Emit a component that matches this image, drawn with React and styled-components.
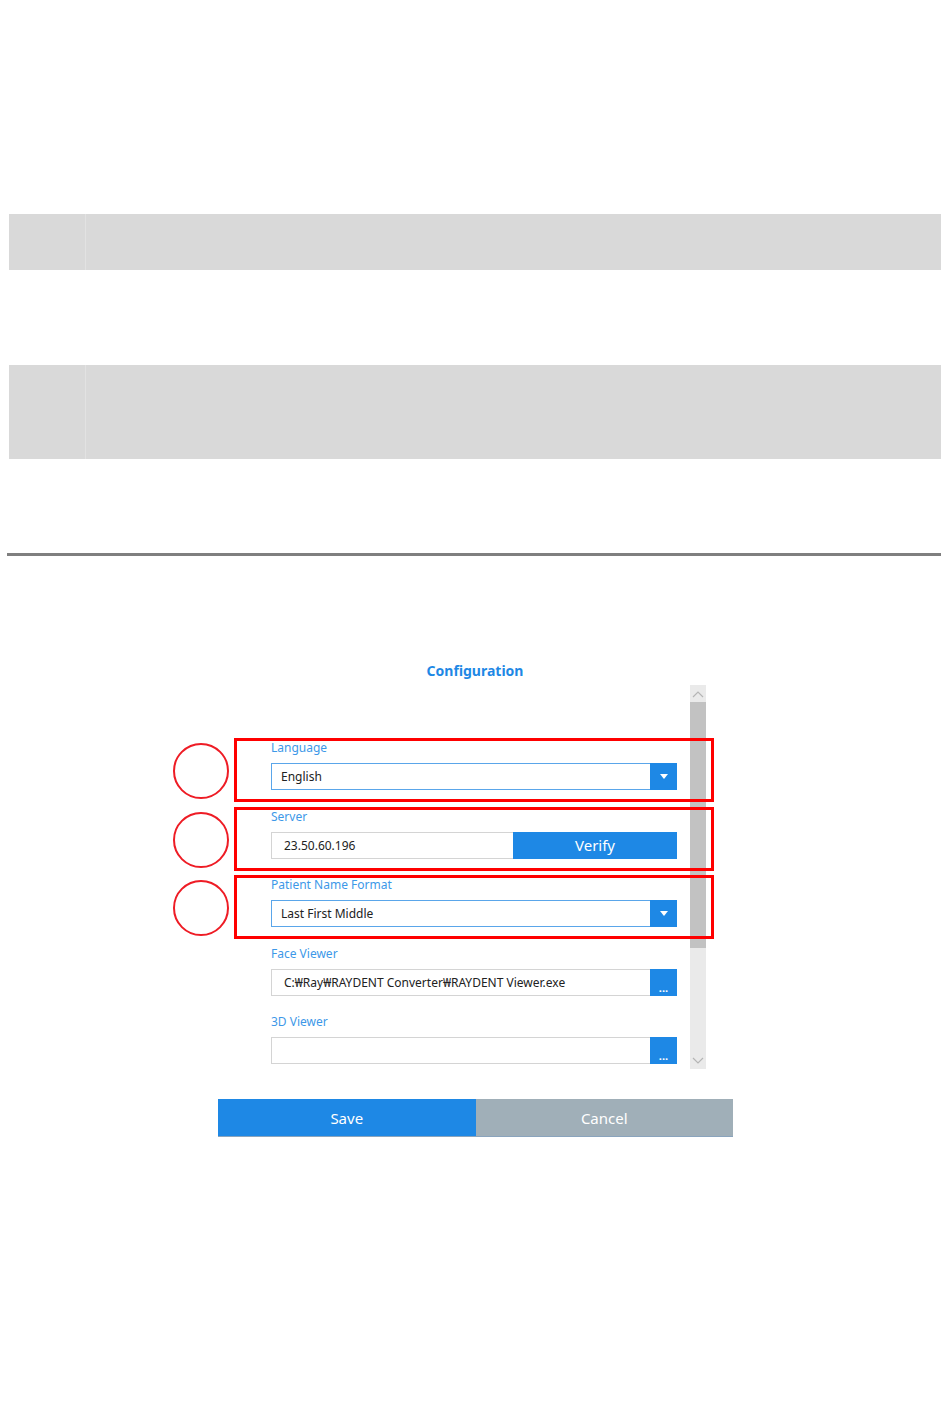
import styled, { createGlobalStyle } from "styled-components";

const GlobalStyle = createGlobalStyle`
  html, body {
    margin: 0;
    padding: 0;
    background: #ffffff;
    font-family: "Noto Sans", "Open Sans", sans-serif;
  }
`;

const rows = [
  { height: 56, shaded: true },
  { height: 95, shaded: false },
  { height: 94, shaded: true },
  { height: 94, shaded: false, last: true },
];

const groups = [
  { label: "Language", kind: "select", value: "English", mark: true },
  { label: "Server", kind: "verify", value: "23.50.60.196", mark: true },
  { label: "Patient Name Format", kind: "select", value: "Last First Middle", mark: true },
  { label: "Face Viewer", kind: "browse", value: "C:\u20A9Ray\u20A9RAYDENT Converter\u20A9RAYDENT Viewer.exe" },
  { label: "3D Viewer", kind: "browse", value: "" },
];

export default function App() {
  return (
    <Page>
      <GlobalStyle />

      <Table>
        {rows.map((row, i) => (
          <Row key={i} $h={row.height} $shaded={row.shaded} $last={row.last}>
            <Cell $w={76} />
            <Cell $w={211} $divider={row.shaded} />
            <Cell $w={645} />
          </Row>
        ))}
      </Table>

      <Dialog>
        <Title>Configuration</Title>

        <Body>
          <Form>
            {groups.map((g) => (
              <Group key={g.label} $mark={g.mark}>
                {g.mark && <Circle />}
                <Label>{g.label}</Label>

                {g.kind === "select" && (
                  <Field $select>
                    <Value>{g.value}</Value>
                    <SideButton>
                      <Triangle />
                    </SideButton>
                  </Field>
                )}

                {g.kind === "verify" && (
                  <Field>
                    <Value $pad={12}>{g.value}</Value>
                    <VerifyButton>Verify</VerifyButton>
                  </Field>
                )}

                {g.kind === "browse" && (
                  <Field>
                    <Value $pad={12}>{g.value}</Value>
                    <SideButton $dots>...</SideButton>
                  </Field>
                )}
              </Group>
            ))}
          </Form>

          <Scrollbar>
            <Arrow>
              <svg width="12" height="8" viewBox="0 0 12 8">
                <path d="M1 7 L6 2 L11 7" fill="none" stroke="#b5b5b5" strokeWidth="1.2" />
              </svg>
            </Arrow>
            <Thumb />
            <Spacer />
            <Arrow>
              <svg width="12" height="8" viewBox="0 0 12 8">
                <path d="M1 1 L6 6 L11 1" fill="none" stroke="#b5b5b5" strokeWidth="1.2" />
              </svg>
            </Arrow>
          </Scrollbar>
        </Body>

        <Actions>
          <ActionButton $primary>Save</ActionButton>
          <ActionButton>Cancel</ActionButton>
        </Actions>
      </Dialog>
    </Page>
  );
}

const Page = styled.div`
  width: 950px;
  min-height: 1426px;
  padding-top: 214px;
  box-sizing: border-box;
`;

const Table = styled.div`
  margin-left: 9px;
  width: 932px;
  display: flex;
  flex-direction: column;
`;

const Row = styled.div`
  display: flex;
  height: ${(p) => p.$h}px;
  background: ${(p) => (p.$shaded ? "#d9d9d9" : "#ffffff")};
  border-bottom: ${(p) => (p.$last ? "3px solid #7f7f7f" : "none")};
  margin-left: ${(p) => (p.$last ? "-2px" : "0")};
  width: ${(p) => (p.$last ? "934px" : "932px")};
`;

const Cell = styled.div`
  width: ${(p) => p.$w}px;
  border-left: ${(p) => (p.$divider ? "1px solid #e2e2e2" : "none")};
  box-sizing: border-box;
`;

const Dialog = styled.div`
  display: flex;
  flex-direction: column;
  align-items: center;
  margin-top: 105px;
`;

const Title = styled.div`
  color: #1e88e5;
  font-size: 14px;
  font-weight: 700;
  line-height: 20px;
  height: 20px;
`;

const Body = styled.div`
  display: flex;
  gap: 13px;
  margin-top: 4px;
  margin-left: 27px;
`;

const Form = styled.div`
  width: 406px;
  padding-top: 55px;
  display: flex;
  flex-direction: column;
  gap: 18.5px;
`;

const Group = styled.div`
  position: relative;
  display: flex;
  flex-direction: column;

  &::after {
    content: "";
    display: ${(p) => (p.$mark ? "block" : "none")};
    position: absolute;
    left: -37px;
    right: -37px;
    top: -2px;
    bottom: -12px;
    border: 3px solid #ff0000;
    pointer-events: none;
  }
`;

const Circle = styled.div`
  position: absolute;
  left: -98px;
  top: 3px;
  width: 52px;
  height: 52px;
  border: 2px solid #ee1c25;
  border-radius: 50%;
`;

const Label = styled.div`
  color: #3d98e8;
  font-size: 12px;
  line-height: 16px;
  height: 16px;
  margin-bottom: 7px;
`;

const Field = styled.div`
  display: flex;
  height: 27px;
  border: 1px solid ${(p) => (p.$select ? "#5aa6ea" : "#d4d4d4")};
  box-sizing: border-box;
  background: #ffffff;
`;

const Value = styled.div`
  flex: 1;
  padding-left: ${(p) => p.$pad || 9}px;
  font-size: 12px;
  line-height: 25px;
  color: #222222;
  white-space: nowrap;
  overflow: hidden;
`;

const SideButton = styled.div`
  width: 27px;
  margin: -1px -1px -1px 0;
  background: #1e88e5;
  color: #ffffff;
  display: flex;
  align-items: ${(p) => (p.$dots ? "flex-end" : "center")};
  justify-content: center;
  font-size: 11px;
  font-weight: 700;
  line-height: 17px;
`;

const Triangle = styled.div`
  width: 0;
  height: 0;
  border-left: 4px solid transparent;
  border-right: 4px solid transparent;
  border-top: 5px solid #ffffff;
`;

const VerifyButton = styled.div`
  width: 164px;
  margin: -1px -1px -1px 0;
  background: #1e88e5;
  color: #ffffff;
  font-size: 15px;
  display: flex;
  align-items: center;
  justify-content: center;
`;

const Scrollbar = styled.div`
  width: 16px;
  height: 384px;
  background: #eaeaea;
  display: flex;
  flex-direction: column;
`;

const Arrow = styled.div`
  height: 17px;
  display: flex;
  align-items: center;
  justify-content: center;
`;

const Thumb = styled.div`
  height: 246px;
  background: #c2c2c2;
`;

const Spacer = styled.div`
  flex: 1;
`;

const Actions = styled.div`
  display: flex;
  margin-top: 30px;
  margin-left: 1px;
  width: 515px;
  box-shadow: 0 1px 0 #8aa4bd;
`;

const ActionButton = styled.div`
  flex: 1;
  height: 37px;
  background: ${(p) => (p.$primary ? "#1e88e5" : "#a0afb8")};
  color: #ffffff;
  font-size: 15px;
  display: flex;
  align-items: center;
  justify-content: center;
`;
